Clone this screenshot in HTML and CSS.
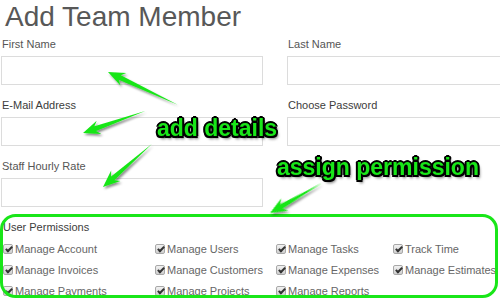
FILE: index.html
```html
<!DOCTYPE html>
<html lang="en">
<head>
    <meta charset="UTF-8">
    <meta name="viewport" content="width=device-width, initial-scale=1.0">
    <title>Add Team Member</title>
    <link rel="stylesheet" href="styles.css">
</head>
<body>

    <div class="page">
        <h1 class="title">Add Team Member</h1>

        <div class="fields">
            <div class="field">
                <label>First Name</label>
                <input type="text">
            </div>
            <div class="field">
                <label>Last Name</label>
                <input type="text">
            </div>
            <div class="field">
                <label class="dark">E-Mail Address</label>
                <input type="text">
            </div>
            <div class="field">
                <label class="dark">Choose Password</label>
                <input type="password">
            </div>
            <div class="field">
                <label>Staff Hourly Rate</label>
                <input type="text">
            </div>
        </div>

        <div class="permissions">
            <div class="perm-title">User Permissions</div>
            <div class="perm-grid">
                <label class="perm"><span class="check"></span>Manage Account</label>
                <label class="perm"><span class="check"></span>Manage Users</label>
                <label class="perm"><span class="check"></span>Manage Tasks</label>
                <label class="perm"><span class="check"></span>Track Time</label>

                <label class="perm"><span class="check"></span>Manage Invoices</label>
                <label class="perm"><span class="check"></span>Manage Customers</label>
                <label class="perm"><span class="check"></span>Manage Expenses</label>
                <label class="perm"><span class="check"></span>Manage Estimates</label>

                <label class="perm"><span class="check"></span>Manage Payments</label>
                <label class="perm"><span class="check"></span>Manage Projects</label>
                <label class="perm"><span class="check"></span>Manage Reports</label>
            </div>
        </div>

        <!-- annotations drawn over the form -->
        <svg class="notes" width="500" height="300" viewBox="0 0 500 300">
            <defs>
                <filter id="shade" x="-30%" y="-30%" width="160%" height="160%">
                    <feDropShadow dx="1.5" dy="2" stdDeviation="1" flood-color="#000" flood-opacity="0.45"/>
                </filter>
            </defs>
            <rect x="1.5" y="215.5" width="495" height="81" rx="14" fill="none" stroke="#19e619" stroke-width="3"/>
            <g fill="#19e619" filter="url(#shade)">
                <polygon transform="translate(108 72) rotate(25.2)" points="0,0 17,-7 13,-2.5 77,0 13,2.5 17,7"/>
                <polygon transform="translate(83 133) rotate(-19.5)" points="0,0 17,-7 13,-2.5 66,0 13,2.5 17,7"/>
                <polygon transform="translate(103 187) rotate(-41.3)" points="0,0 17,-7 13,-2.5 65,0 13,2.5 17,7"/>
                <polygon transform="translate(270 213) rotate(-30)" points="0,0 17,-7 13,-2.5 60,0 13,2.5 17,7"/>
            </g>
        </svg>
        <span class="note note-details">add details</span>
        <span class="note note-assign">assign permission</span>
    </div>

</body>
</html>
```

FILE: styles.css
```css
body {
    margin: 0;
    background-color: #fff;
    font-family: "Liberation Sans", Arial, sans-serif;
    overflow: hidden;
}

.page {
    position: relative;
    width: 500px;
    height: 300px;
    overflow: hidden;
}

.title {
    margin: 0 0 4px 5px;
    padding-top: 1px;
    font-size: 28px;
    line-height: 32px;
    font-weight: normal;
    color: #585858;
}

.fields {
    display: grid;
    grid-template-columns: 262px 262px;
    column-gap: 24px;
    padding-left: 1px;
}

.field {
    display: flex;
    flex-direction: column;
    margin-bottom: 13px;
}

.field label {
    margin: 0 0 5px 1px;
    font-size: 11px;
    line-height: 14px;
    color: #555;
}

.field label.dark {
    color: #3c3c3c;
}

.field input {
    height: 29px;
    margin: 0;
    padding: 0 6px;
    box-sizing: border-box;
    border: 1px solid #dcdcdc;
    background-color: #fff;
}

.permissions {
    padding-left: 3px;
}

.perm-title {
    margin-bottom: 4px;
    font-size: 11px;
    line-height: 14px;
    color: #3c3c3c;
}

.perm-grid {
    display: grid;
    grid-template-columns: 152px 121px 117px auto;
    grid-auto-rows: 21px;
}

.perm {
    display: flex;
    align-items: center;
    gap: 2px;
    font-size: 11px;
    color: #666;
    white-space: nowrap;
}

.check {
    position: relative;
    width: 10px;
    height: 10px;
    box-sizing: border-box;
    border: 1px solid #a8a8a8;
    border-radius: 2px;
    background: linear-gradient(#f2f2f2, #cfcfcf);
}

.check::after {
    content: "";
    position: absolute;
    left: 2.5px;
    top: 0;
    width: 2px;
    height: 5px;
    border: solid #333;
    border-width: 0 2px 2px 0;
    transform: rotate(45deg);
}

/* annotation layer */
.notes {
    position: absolute;
    top: 0;
    left: 0;
    pointer-events: none;
}

.note {
    position: absolute;
    font-size: 23px;
    line-height: 23px;
    font-weight: bold;
    color: #19e619;
    white-space: nowrap;
    text-shadow:
        -1.5px -1.5px 0 #000, 1.5px -1.5px 0 #000,
        -1.5px 1.5px 0 #000, 1.5px 1.5px 0 #000,
        0 -2px 0 #000, 0 2px 0 #000,
        -2px 0 0 #000, 2px 0 0 #000,
        2px 3px 3px rgba(0, 0, 0, 0.6);
}

.note-details {
    left: 157px;
    top: 117px;
}

.note-assign {
    left: 277px;
    top: 156px;
}
```
